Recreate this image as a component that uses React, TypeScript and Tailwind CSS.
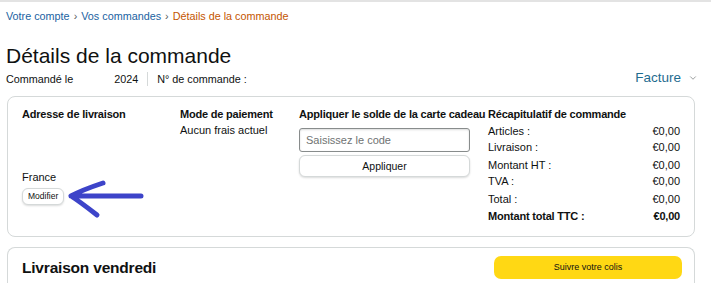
import { ChevronDown } from 'lucide-react'

const summary = [
  { label: 'Articles :', value: '€0,00', gap: false },
  { label: 'Livraison :', value: '€0,00', gap: false },
  { label: 'Montant HT :', value: '€0,00', gap: true },
  { label: 'TVA :', value: '€0,00', gap: false },
  { label: 'Total :', value: '€0,00', gap: true },
]

const HandArrow = () => (
  <svg width="80" height="44" viewBox="0 0 80 44" className="absolute left-[58px] top-[82px]">
    <path
      d="M37 4 C 25 8, 14 12, 5 17 C 13 22, 22 29, 31 36 M5 17 C 28 17, 52 17, 75 17"
      fill="none"
      stroke="#3d44c9"
      strokeWidth="5"
      strokeLinecap="round"
      strokeLinejoin="round"
    />
  </svg>
)

export default function App() {
  return (
    <div className="min-h-screen bg-white text-[#0f1111] font-['Liberation_Sans',Arial,sans-serif] border-t-2 border-[#e3e3e3]">
      <div className="px-[6px] pt-[6px]">
        <nav className="text-[10.8px] leading-[16px] flex items-center gap-[4px]">
          <span className="text-[#2162a1]">Votre compte</span>
          <span className="text-[#565959]">›</span>
          <span className="text-[#2162a1]">Vos commandes</span>
          <span className="text-[#565959]">›</span>
          <span className="text-[#c45500]">Détails de la commande</span>
        </nav>

        <h1 className="mt-[20px] text-[21px] leading-[24px]">Détails de la commande</h1>

        <div className="mt-[1px] flex items-end justify-between pr-[7px]">
          <div className="flex items-center text-[10.8px] leading-[16px] text-[#0f1111]">
            <span>Commandé le</span>
            <span className="ml-[41px]">2024</span>
            <span className="mx-[9px] h-[14px] w-px bg-[#d5d9d9]" />
            <span>N° de commande :</span>
          </div>
          <div className="flex items-center gap-[7px] text-[13.5px] leading-[18px] text-[#1f6c8f]">
            Facture
            <ChevronDown size={10} className="text-[#888c8c]" />
          </div>
        </div>

        <div className="relative mt-[9px] ml-[1px] mr-[10px] rounded-[8px] border border-[#d5d9d9] px-[14px] pt-[9px] pb-[12px] flex text-[11px] leading-[16px]">
          <div className="w-[158px]">
            <div className="font-bold tracking-[-0.2px]">Adresse de livraison</div>
            <div className="h-[47px]" />
            <div className="text-[#0f1111]">France</div>
            <button className="mt-[3px] rounded-[6px] border border-[#d5d9d9] bg-white px-[5px] py-[2px] text-[8.5px] leading-[11px] text-[#0f1111] shadow-[0_1px_2px_rgba(15,17,17,0.15)]">
              Modifier
            </button>
          </div>
          <div className="w-[119px]">
            <div className="font-bold tracking-[-0.2px]">Mode de paiement</div>
            <div>Aucun frais actuel</div>
          </div>
          <div className="w-[189px]">
            <div className="font-bold whitespace-nowrap tracking-[-0.2px]">Appliquer le solde de la carte cadeau</div>
            <input
              placeholder="Saisissez le code"
              className="mt-[6px] block h-[24px] w-[171px] rounded-[3px] border border-[#888c8c] px-[6px] text-[11px] placeholder:text-[#6f7373] shadow-[inset_0_1px_2px_rgba(15,17,17,0.15)]"
            />
            <button className="mt-[3px] block h-[22px] w-[171px] rounded-[6px] border border-[#d5d9d9] bg-white text-[10.5px] shadow-[0_1px_2px_rgba(15,17,17,0.15)]">
              Appliquer
            </button>
          </div>
          <div className="flex-1">
            <div className="font-bold tracking-[-0.2px]">Récapitulatif de commande</div>
            <div className="mt-[1px]">
              {summary.map((row) => (
                <div key={row.label} className={`flex justify-between ${row.gap ? 'mt-[2px]' : ''}`}>
                  <span>{row.label}</span>
                  <span>{row.value}</span>
                </div>
              ))}
              <div className="mt-[1px] flex justify-between font-bold tracking-[-0.2px]">
                <span>Montant total TTC :</span>
                <span>€0,00</span>
              </div>
            </div>
          </div>
          <HandArrow />
        </div>

        <div className="mt-[10px] ml-[1px] mr-[10px] rounded-t-[8px] border border-b-0 border-[#d5d9d9] pl-[14px] pr-[12px] pt-[8px] pb-[10px] flex items-center justify-between">
          <div className="text-[15.5px] font-bold tracking-[-0.2px]">Livraison vendredi</div>
          <button className="h-[23px] w-[188px] rounded-[7px] bg-[#ffd814] text-[9px] text-[#0f1111]">
            Suivre votre colis
          </button>
        </div>
      </div>
    </div>
  )
}
